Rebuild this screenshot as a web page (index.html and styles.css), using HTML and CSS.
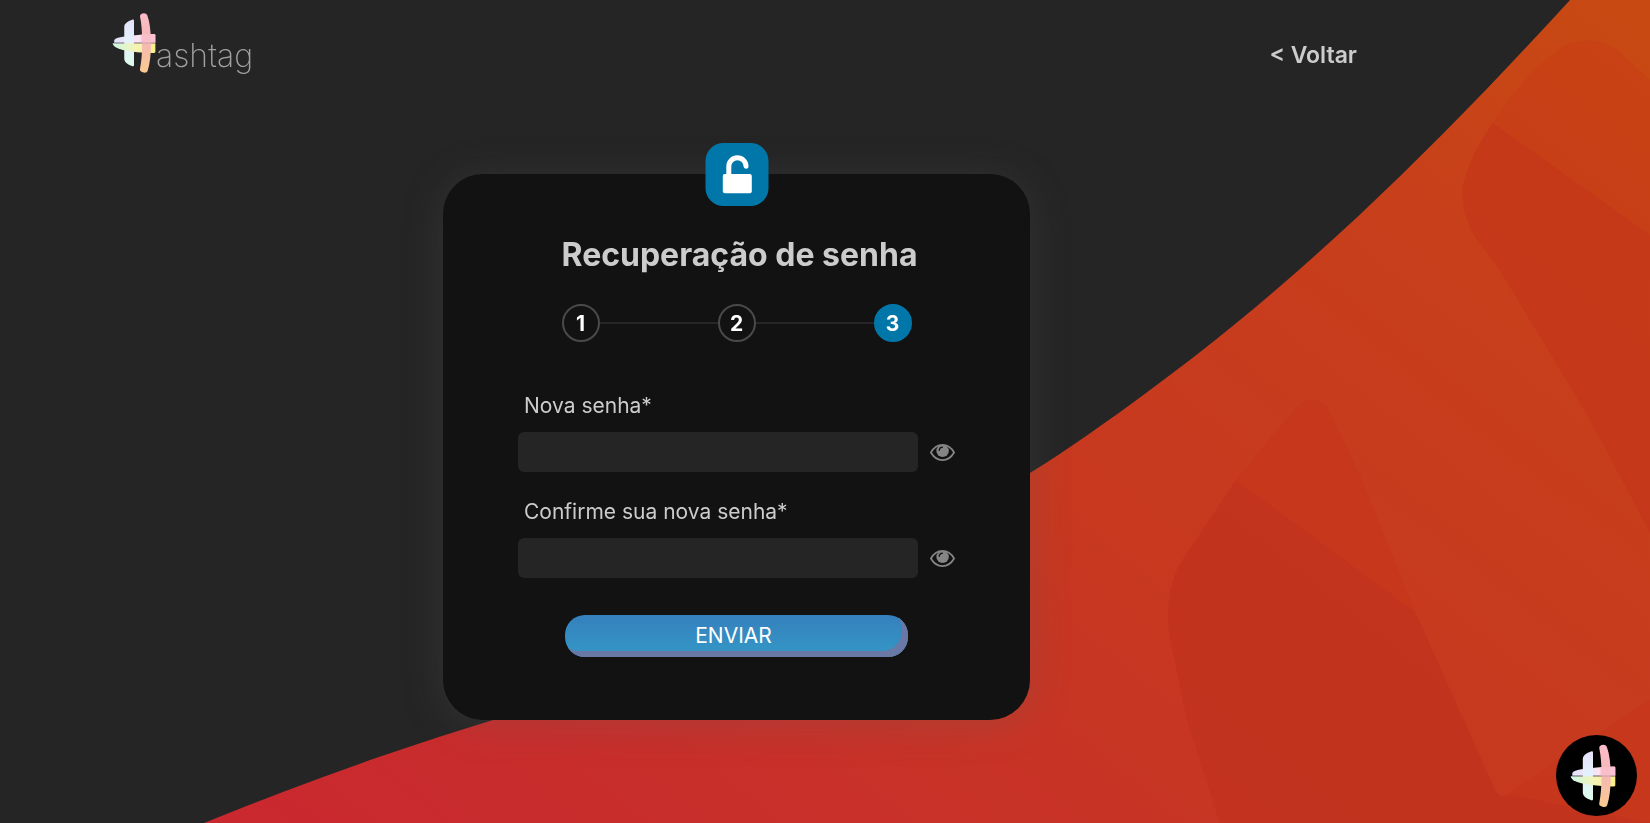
FILE: index.html
```
<!DOCTYPE html>
<html lang="pt-BR">
<head>
    <meta charset="UTF-8">
    <meta name="viewport" content="width=device-width, initial-scale=1.0">
    <title>Hashtag - Recuperação de senha</title>
    <link rel="stylesheet" href="styles.css">
</head>
<body>
    <svg class="background" viewBox="0 0 1650 823" preserveAspectRatio="none" aria-hidden="true">
        <defs>
            <linearGradient id="wave" gradientUnits="userSpaceOnUse" x1="390" y1="960" x2="1340" y2="-234">
                <stop offset="0" stop-color="#c9282f"/>
                <stop offset="0.25" stop-color="#c8302a"/>
                <stop offset="0.5" stop-color="#c73820"/>
                <stop offset="0.8" stop-color="#c73f1b"/>
                <stop offset="1" stop-color="#c84a12"/>
            </linearGradient>
            <clipPath id="wave-clip">
                <path d="M204 823C300 784 400 748 493 720C690 655 870 575 1030 473C1072 447 1112 418 1150 390C1310 273 1450 131 1570 0H1650V823Z"/>
            </clipPath>
        </defs>
        <g clip-path="url(#wave-clip)">
            <rect width="1650" height="823" fill="url(#wave)"/>
            <path fill="#c83a16" fill-opacity="0.4" d="M1650 80L1617 50Q1595 34 1565 45Q1527 70 1493 123Q1470 155 1463 185Q1460 214 1477 240Q1497 264 1510 287L1585 411Q1620 475 1650 533Z"/>
            <path fill="#c3321b" fill-opacity="0.4" d="M1493 123Q1470 155 1463 185Q1460 214 1477 240Q1497 264 1510 287L1585 411Q1620 475 1650 533V235Z"/>
            <path fill="#c6331a" fill-opacity="0.5" d="M1294 410Q1310 390 1327 407L1360 475L1415 612L1495 790Q1500 800 1508 794L1650 700V823H1220L1187 720L1172 647Q1162 605 1178 567L1236 480Z"/>
            <path fill="#bf3220" fill-opacity="0.6" d="M1236 480L1415 612L1495 790Q1500 800 1508 794L1650 823H1220L1187 720L1172 647Q1162 605 1178 567Z"/>
        </g>
    </svg>

    <!-- shapes shared by the logo, the chat button and the password fields -->
    <svg class="sprite" width="0" height="0" aria-hidden="true">
        <defs>
            <linearGradient id="bar-left" x1="0" y1="0" x2="0" y2="1">
                <stop offset="0" stop-color="#e6e2fb"/>
                <stop offset="0.5" stop-color="#e4f2fd"/>
                <stop offset="1" stop-color="#dcfbea"/>
            </linearGradient>
            <linearGradient id="bar-right" x1="0" y1="0" x2="0" y2="1">
                <stop offset="0" stop-color="#fcbcc8"/>
                <stop offset="0.5" stop-color="#f4b8b4"/>
                <stop offset="1" stop-color="#fbcb90"/>
            </linearGradient>
            <linearGradient id="bar-top">
                <stop offset="0" stop-color="#e2e4fc"/>
                <stop offset="0.6" stop-color="#fbe3f3"/>
                <stop offset="1" stop-color="#fdbcd4"/>
            </linearGradient>
            <linearGradient id="bar-bottom">
                <stop offset="0" stop-color="#ccf8e6"/>
                <stop offset="0.55" stop-color="#f5f3b4"/>
                <stop offset="1" stop-color="#f8ee88"/>
            </linearGradient>
            <symbol id="hash" viewBox="88 60 140 194">
                <path fill="url(#bar-top)" d="M95 156V148Q97 140 128 136Q180 128 222 128Q226 128 226 132V156Z"/>
                <path fill="url(#bar-left)" d="M154 82Q158 81 158 86V228Q158 232 153 231Q127 222 127 208V106Q127 90 154 82Z"/>
                <path fill="url(#bar-bottom)" d="M90 158H226V185Q226 189 220 189Q165 188 122 179Q90 172 90 158Z"/>
                <path fill="url(#bar-right)" d="M177 72Q176 66 184 63Q196 60 200 68Q212 100 212 160Q212 212 201 247Q198 253 189 251Q175 248 177 240Q184 205 184 155Q184 105 177 72Z"/>
                <path fill="#f9c2d2" fill-opacity="0.7" d="M180 130L222 128Q226 128 226 132V156H180Z"/>
                <path stroke="#8d7090" stroke-opacity="0.5" stroke-width="2" d="M158 157H226M98 157H127"/>
            </symbol>
            <symbol id="eye" viewBox="0 0 25 17">
                <path fill="none" stroke="#858585" stroke-width="1.700" d="M.9 8.500C3.500 4 7.500.9 12.500.9S21.500 4 24.100 8.500C21.500 13 17.500 16.100 12.500 16.100S3.500 13 .9 8.500Z"/>
                <circle cx="12.600" cy="6.900" r="6.200" fill="#858585"/>
                <path fill="none" stroke="#141414" stroke-width="1.300" stroke-linecap="round" d="M9.200 6.300Q9.500 3.400 12.400 3.200"/>
            </symbol>
        </defs>
    </svg>

    <header class="header">
        <a class="logo" href="index.html" aria-label="Hashtag">
            <svg class="logo-mark"><use href="#hash"/></svg>
            <span class="logo-text">ashtag</span>
        </a>
        <a class="back" href="login.html">&lt; Voltar</a>
    </header>

    <main class="main">
        <section class="card">
            <div class="badge">
                <svg viewBox="0 0 63 63" aria-hidden="true">
                    <path fill="none" stroke="#fff" stroke-width="5" stroke-linecap="round" d="M23.300 33V23.300A8.600 8.600 0 0 1 40.500 23.300"/>
                    <rect x="17.300" y="31" width="29" height="19.300" rx="2" fill="#fff"/>
                </svg>
            </div>

            <div class="card-top">
                <h1>Recuperação de senha</h1>
                <ol class="steps">
                    <li class="step">1</li>
                    <li class="step">2</li>
                    <li class="step active">3</li>
                </ol>
            </div>

            <form class="form">
                <div class="field">
                    <label for="senha">Nova senha*</label>
                    <div class="field-row">
                        <input type="password" id="senha" name="senha" required>
                        <button type="button" class="show" aria-label="Mostrar senha"><svg><use href="#eye"/></svg></button>
                    </div>
                </div>
                <div class="field">
                    <label for="confirma">Confirme sua nova senha*</label>
                    <div class="field-row">
                        <input type="password" id="confirma" name="confirma" required>
                        <button type="button" class="show" aria-label="Mostrar senha"><svg><use href="#eye"/></svg></button>
                    </div>
                </div>
                <button type="submit" class="submit">ENVIAR</button>
            </form>
        </section>
    </main>

    <button type="button" class="chat" aria-label="Abrir chat">
        <svg><use href="#hash"/></svg>
    </button>

    <script>
        document.querySelectorAll('.show').forEach((button) => {
            button.addEventListener('click', () => {
                const input = button.previousElementSibling;
                input.type = input.type === 'password' ? 'text' : 'password';
            });
        });
    </script>
</body>
</html>
```
FILE: styles.css
```
* {
    box-sizing: border-box;
}

body {
    margin: 0;
    min-height: 100vh;
    background: #252525;
    color: #ccc;
    font-family: Inter, "Open Sans", sans-serif;
    font-size: 21px;
}

button {
    border: none;
    padding: 0;
    background: none;
    font-family: inherit;
    cursor: pointer;
}

.background {
    position: fixed;
    top: 0;
    left: 0;
    z-index: -1;
    width: 100%;
    height: 100%;
}

.sprite {
    position: absolute;
}

/* Header */
.header {
    display: flex;
    justify-content: space-between;
    align-items: flex-start;
    height: 100px;
    padding: 12px 293px 0 112px;
}

.logo {
    display: flex;
    align-items: flex-end;
    text-decoration: none;
}

.logo-mark {
    width: 44px;
    height: 62px;
}

.logo-text {
    padding-bottom: 2px;
    color: #a0a0a0;
    font-size: 32px;
    font-weight: 200;
    line-height: 32px;
}

.back {
    margin-top: 28px;
    color: #ccc;
    font-size: 23px;
    font-weight: 600;
    line-height: 30px;
    text-decoration: none;
}

/* Card */
.main {
    display: flex;
    justify-content: center;
    padding: 74px 177px 40px 0;
}

.card {
    position: relative;
    display: flex;
    flex-direction: column;
    align-items: center;
    width: 587px;
    padding: 63px 75px;
    border-radius: 40px;
    background: #121212;
    box-shadow: 0 4px 40px rgba(97, 97, 97, 0.25);
}

.badge {
    position: absolute;
    top: -31px;
    left: 50%;
    width: 63px;
    height: 63px;
    border-radius: 18px;
    background: #0077a8;
    transform: translateX(-50%);
}

.badge svg {
    display: block;
}

.card-top {
    width: 350px;
}

h1 {
    margin: 0 0 31px;
    font-size: 32px;
    font-weight: 700;
    line-height: 36px;
    white-space: nowrap;
}

.steps {
    display: flex;
    justify-content: space-between;
    margin: 0;
    padding: 0;
    background: linear-gradient(#262626, #262626) center / 100% 2px no-repeat;
    list-style: none;
}

.step {
    display: flex;
    justify-content: center;
    align-items: center;
    width: 38px;
    height: 38px;
    border: 2px solid #4a4a4a;
    border-radius: 50%;
    background: #121212;
    color: #fff;
    font-weight: 700;
}

.step.active {
    border-color: #0077a8;
    background: #0077a8;
}

/* Form */
.form {
    display: flex;
    flex-direction: column;
    gap: 28px;
    width: 100%;
    margin-top: 52px;
}

.field label {
    display: block;
    margin-bottom: 14px;
    padding-left: 6px;
    line-height: 24px;
}

.field-row {
    display: flex;
    align-items: center;
    gap: 12px;
}

.field input {
    flex: 1;
    min-width: 0;
    height: 40px;
    padding: 0 10px;
    border: none;
    border-radius: 6px;
    outline: none;
    background: #252525;
    color: #ccc;
    font-family: inherit;
    font-size: 21px;
}

.show,
.show svg {
    display: block;
    width: 25px;
    height: 17px;
}

.submit {
    align-self: center;
    width: 343px;
    height: 42px;
    margin-top: 9px;
    padding: 0 6px 2px 0;
    border-radius: 20px;
    background: linear-gradient(#3580bd, #3498c6);
    box-shadow: inset -6px -6px 0 #6a78a6;
    color: #fff;
    font-size: 21px;
}

/* Chat button */
.chat {
    position: fixed;
    right: 13px;
    bottom: 7px;
    display: flex;
    justify-content: center;
    align-items: center;
    width: 81px;
    height: 81px;
    padding-right: 8px;
    border-radius: 50%;
    background: #000;
}

.chat svg {
    width: 46px;
    height: 64px;
}
```
